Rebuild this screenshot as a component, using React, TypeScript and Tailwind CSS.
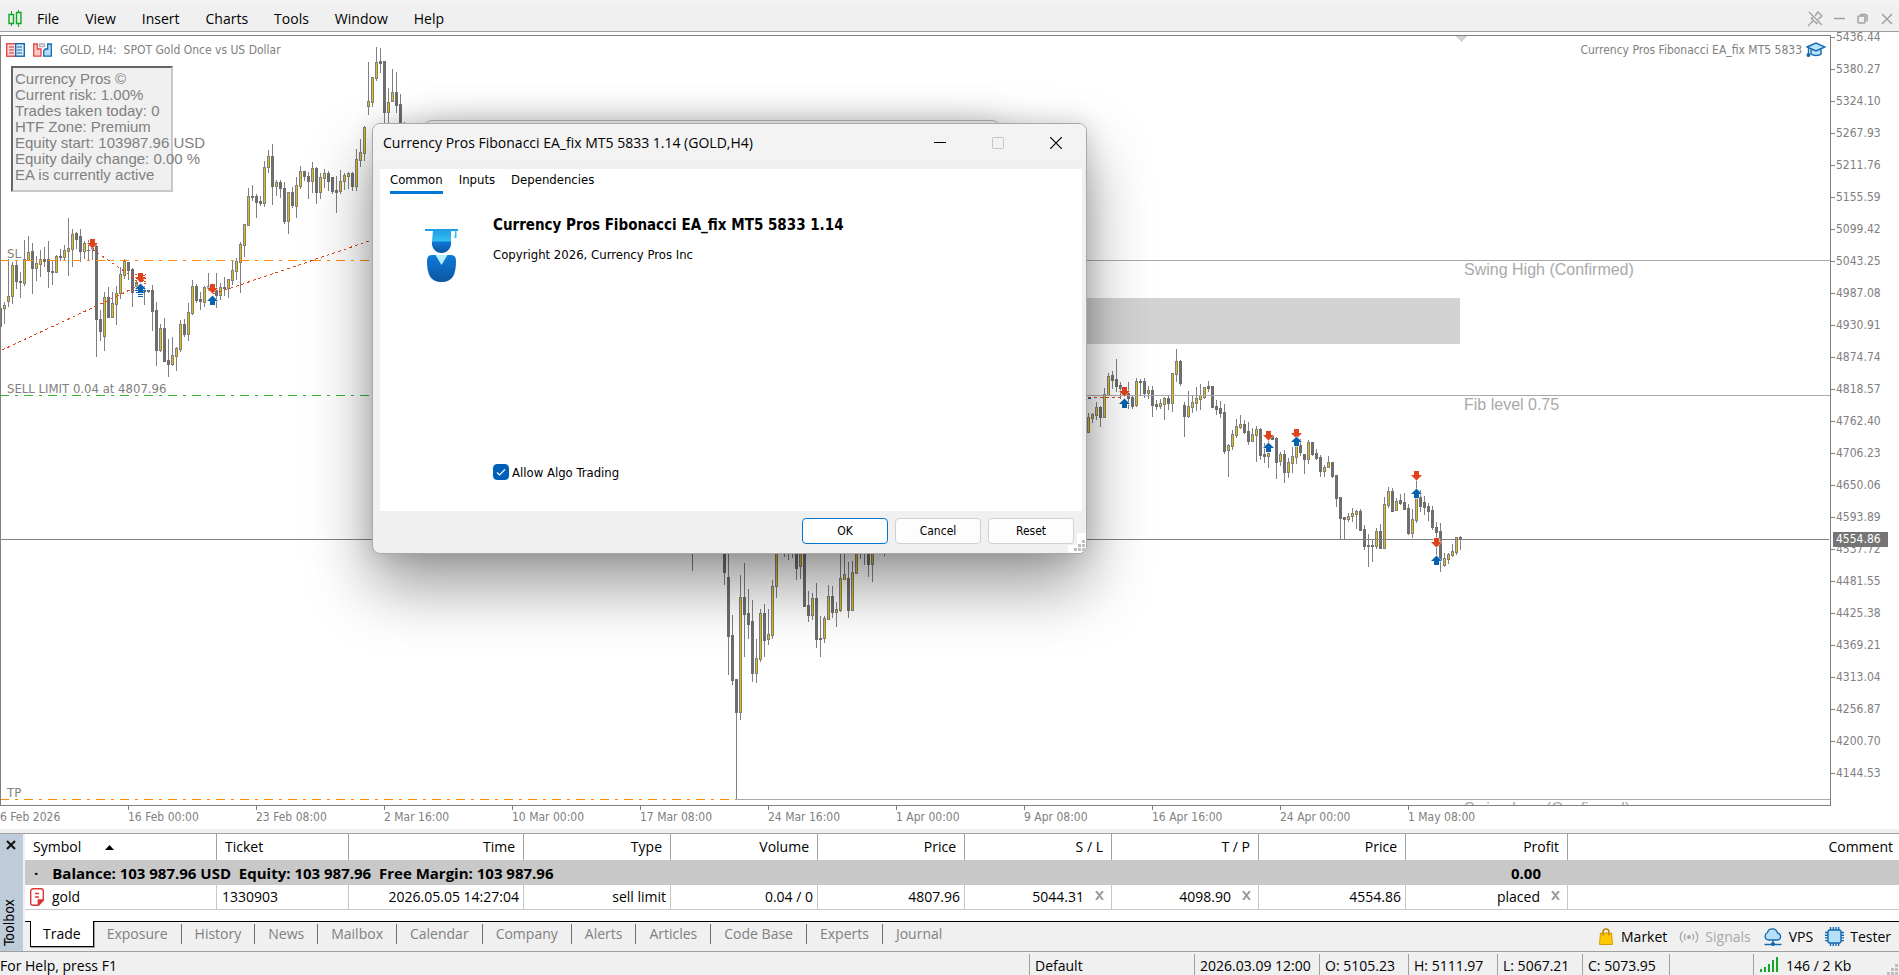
import { ReactNode, useState } from "react";

type Candle = [
  x: number,
  high: number,
  top: number,
  bottom: number,
  low: number,
  up: 0 | 1
];

const candles: Candle[] = [
  [0, 308, 308, 326, 326, 0],
  [4, 302, 305, 308, 323, 1],
  [8, 259, 296, 301, 306, 1],
  [12, 262, 265, 296, 303, 1],
  [16, 260, 265, 281, 288, 0],
  [20, 272, 281, 282, 297, 0],
  [24, 240, 259, 283, 285, 1],
  [28, 236, 252, 260, 260, 1],
  [32, 243, 251, 268, 293, 0],
  [36, 256, 263, 268, 280, 1],
  [40, 250, 259, 264, 276, 1],
  [44, 247, 259, 261, 266, 0],
  [48, 241, 259, 271, 287, 0],
  [52, 260, 271, 272, 284, 0],
  [56, 255, 256, 272, 272, 1],
  [60, 249, 256, 257, 260, 0],
  [64, 245, 250, 257, 260, 1],
  [68, 218, 248, 251, 275, 1],
  [72, 229, 234, 249, 266, 1],
  [76, 232, 233, 239, 248, 0],
  [80, 229, 236, 251, 261, 0],
  [84, 241, 243, 251, 258, 1],
  [88, 240, 250, 250, 260, 0],
  [92, 246, 248, 248, 259, 0],
  [96, 245, 246, 319, 356, 0],
  [100, 310, 319, 331, 340, 0],
  [104, 292, 297, 336, 350, 1],
  [108, 287, 297, 317, 317, 0],
  [112, 292, 303, 317, 317, 1],
  [116, 286, 293, 304, 324, 1],
  [120, 267, 274, 293, 298, 1],
  [124, 259, 261, 275, 278, 1],
  [128, 262, 262, 270, 279, 0],
  [132, 268, 269, 292, 306, 0],
  [136, 280, 282, 286, 290, 1],
  [144, 286, 290, 291, 304, 0],
  [148, 290, 290, 291, 292, 0],
  [152, 285, 290, 311, 330, 0],
  [156, 302, 310, 350, 365, 0],
  [160, 324, 328, 350, 351, 1],
  [164, 318, 328, 361, 361, 0],
  [168, 339, 360, 364, 376, 0],
  [172, 337, 355, 364, 365, 1],
  [176, 347, 348, 356, 370, 1],
  [180, 320, 324, 349, 351, 1],
  [184, 319, 324, 334, 336, 0],
  [188, 303, 312, 334, 340, 1],
  [192, 280, 286, 313, 314, 1],
  [196, 284, 286, 300, 302, 0],
  [200, 292, 299, 301, 309, 0],
  [204, 286, 287, 302, 306, 1],
  [208, 273, 286, 287, 290, 0],
  [216, 273, 290, 295, 307, 0],
  [220, 283, 287, 295, 299, 1],
  [224, 277, 287, 288, 295, 0],
  [228, 279, 279, 288, 297, 1],
  [232, 261, 270, 280, 284, 1],
  [236, 258, 261, 271, 279, 1],
  [240, 242, 244, 262, 292, 1],
  [244, 224, 224, 245, 256, 1],
  [248, 188, 196, 225, 225, 1],
  [252, 185, 196, 197, 200, 0],
  [256, 194, 196, 202, 217, 0],
  [260, 196, 201, 203, 205, 0],
  [264, 161, 167, 203, 206, 1],
  [268, 150, 156, 167, 172, 1],
  [272, 144, 156, 186, 204, 0],
  [276, 180, 182, 186, 195, 1],
  [280, 180, 182, 188, 197, 0],
  [284, 182, 188, 221, 223, 0],
  [288, 192, 192, 221, 233, 1],
  [292, 187, 192, 205, 207, 0],
  [296, 177, 185, 206, 217, 1],
  [300, 166, 171, 186, 188, 1],
  [304, 171, 171, 176, 180, 0],
  [308, 172, 176, 181, 198, 0],
  [312, 162, 168, 181, 192, 1],
  [316, 167, 168, 192, 203, 0],
  [320, 173, 177, 192, 198, 1],
  [324, 169, 173, 178, 187, 1],
  [328, 171, 173, 181, 190, 0],
  [332, 177, 177, 191, 193, 0],
  [336, 176, 190, 192, 212, 0],
  [340, 170, 181, 191, 193, 1],
  [344, 173, 175, 181, 189, 1],
  [348, 172, 173, 176, 188, 1],
  [352, 172, 173, 186, 190, 0],
  [356, 149, 159, 186, 190, 1],
  [360, 139, 152, 160, 166, 1],
  [364, 126, 127, 153, 160, 1],
  [368, 62, 101, 106, 114, 1],
  [372, 77, 77, 102, 106, 1],
  [376, 47, 62, 78, 80, 1],
  [380, 48, 61, 63, 72, 0],
  [384, 61, 61, 112, 124, 0],
  [388, 88, 102, 112, 122, 1],
  [392, 69, 92, 101, 101, 1],
  [396, 72, 92, 105, 112, 0],
  [400, 94, 104, 127, 130, 0],
  [404, 122, 124, 130, 130, 0],
  [692, 550, 550, 550, 570, 0],
  [724, 545, 550, 572, 584, 0],
  [728, 550, 577, 636, 674, 0],
  [732, 615, 635, 680, 684, 0],
  [736, 679, 679, 712, 799, 0],
  [740, 575, 597, 712, 719, 1],
  [744, 563, 597, 614, 656, 0],
  [748, 589, 613, 624, 638, 0],
  [752, 600, 621, 673, 681, 0],
  [756, 639, 658, 673, 682, 1],
  [760, 609, 613, 659, 661, 1],
  [764, 604, 613, 640, 656, 0],
  [768, 609, 634, 639, 644, 1],
  [772, 580, 586, 635, 638, 1],
  [776, 550, 550, 586, 597, 1],
  [784, 550, 550, 550, 556, 0],
  [788, 550, 550, 550, 559, 0],
  [792, 550, 550, 550, 557, 0],
  [796, 550, 550, 568, 579, 0],
  [800, 550, 550, 566, 578, 1],
  [804, 550, 550, 606, 606, 0],
  [808, 591, 605, 615, 621, 0],
  [812, 593, 598, 615, 619, 1],
  [816, 583, 598, 639, 647, 0],
  [820, 616, 638, 639, 656, 0],
  [824, 616, 618, 638, 642, 1],
  [828, 585, 596, 619, 619, 1],
  [832, 586, 596, 612, 617, 0],
  [836, 602, 609, 612, 626, 1],
  [840, 553, 578, 610, 611, 1],
  [844, 554, 574, 579, 579, 1],
  [848, 562, 578, 610, 617, 0],
  [852, 561, 572, 610, 610, 1],
  [856, 550, 550, 573, 573, 1],
  [860, 550, 550, 550, 558, 0],
  [864, 550, 550, 550, 564, 0],
  [868, 550, 550, 564, 576, 0],
  [872, 550, 550, 564, 581, 1],
  [884, 550, 550, 550, 555, 0],
  [1088, 413, 417, 432, 432, 1],
  [1092, 413, 414, 418, 422, 1],
  [1096, 402, 407, 415, 419, 1],
  [1100, 406, 407, 417, 426, 0],
  [1104, 388, 394, 417, 417, 1],
  [1108, 373, 376, 395, 395, 1],
  [1112, 371, 375, 380, 388, 0],
  [1116, 359, 379, 386, 391, 0],
  [1120, 382, 385, 388, 398, 0],
  [1128, 382, 393, 398, 408, 0],
  [1132, 396, 397, 406, 408, 0],
  [1136, 378, 381, 405, 406, 1],
  [1140, 379, 381, 382, 394, 0],
  [1144, 378, 381, 393, 397, 0],
  [1148, 386, 390, 393, 398, 1],
  [1152, 386, 390, 405, 416, 0],
  [1156, 400, 404, 406, 409, 0],
  [1160, 399, 403, 406, 408, 1],
  [1164, 397, 398, 404, 419, 1],
  [1168, 396, 398, 403, 409, 0],
  [1172, 373, 373, 403, 411, 1],
  [1176, 349, 361, 374, 381, 1],
  [1180, 360, 361, 383, 385, 0],
  [1184, 402, 405, 416, 436, 0],
  [1188, 391, 406, 416, 417, 1],
  [1192, 396, 402, 407, 412, 1],
  [1196, 387, 398, 403, 410, 1],
  [1200, 384, 395, 399, 409, 1],
  [1204, 387, 387, 397, 398, 1],
  [1208, 381, 386, 388, 391, 0],
  [1212, 386, 386, 407, 407, 0],
  [1216, 400, 406, 409, 414, 0],
  [1220, 401, 408, 413, 417, 0],
  [1224, 404, 412, 451, 453, 0],
  [1228, 444, 445, 450, 476, 1],
  [1232, 430, 434, 446, 449, 1],
  [1236, 419, 426, 435, 437, 1],
  [1240, 415, 424, 427, 428, 1],
  [1244, 420, 424, 432, 433, 0],
  [1248, 422, 431, 441, 444, 0],
  [1252, 428, 434, 441, 441, 1],
  [1256, 426, 429, 435, 461, 1],
  [1260, 428, 429, 455, 459, 0],
  [1264, 443, 454, 456, 462, 0],
  [1268, 440, 453, 456, 467, 1],
  [1272, 436, 436, 439, 439, 0],
  [1276, 437, 438, 462, 478, 0],
  [1280, 452, 454, 461, 465, 1],
  [1284, 450, 454, 472, 482, 0],
  [1288, 458, 462, 472, 477, 1],
  [1292, 447, 456, 463, 472, 1],
  [1296, 440, 445, 457, 463, 1],
  [1300, 439, 445, 452, 455, 0],
  [1304, 454, 454, 459, 473, 0],
  [1308, 440, 442, 459, 463, 1],
  [1312, 442, 442, 454, 455, 0],
  [1316, 449, 453, 458, 459, 0],
  [1320, 455, 457, 471, 476, 0],
  [1324, 465, 467, 471, 476, 1],
  [1328, 456, 462, 467, 467, 1],
  [1332, 462, 462, 476, 477, 0],
  [1336, 475, 475, 498, 506, 0],
  [1340, 497, 497, 518, 539, 0],
  [1344, 517, 517, 519, 539, 0],
  [1348, 513, 516, 519, 521, 1],
  [1352, 508, 513, 516, 521, 1],
  [1356, 510, 511, 514, 528, 1],
  [1360, 509, 511, 530, 530, 0],
  [1364, 525, 529, 546, 549, 0],
  [1368, 534, 545, 546, 566, 0],
  [1372, 540, 545, 546, 561, 0],
  [1376, 528, 531, 546, 548, 1],
  [1380, 524, 531, 548, 548, 0],
  [1384, 497, 504, 548, 548, 1],
  [1388, 487, 491, 505, 507, 1],
  [1392, 488, 491, 511, 511, 0],
  [1396, 498, 501, 510, 510, 1],
  [1400, 494, 500, 503, 504, 0],
  [1404, 493, 502, 509, 509, 0],
  [1408, 504, 508, 533, 534, 0],
  [1412, 509, 519, 533, 537, 1],
  [1416, 480, 497, 520, 522, 1],
  [1420, 490, 497, 506, 511, 0],
  [1424, 496, 502, 507, 514, 0],
  [1428, 503, 506, 511, 520, 0],
  [1432, 506, 510, 527, 529, 0],
  [1436, 522, 527, 532, 554, 0],
  [1440, 523, 531, 560, 571, 0],
  [1444, 553, 558, 565, 566, 1],
  [1448, 553, 554, 559, 563, 1],
  [1452, 544, 551, 555, 556, 1],
  [1456, 537, 537, 552, 554, 1],
  [1460, 536, 537, 539, 549, 0],
];

const sells = [
  [92, 239],
  [140, 273],
  [212, 284],
  [1124, 387],
  [1268, 431],
  [1296, 429],
  [1416, 471],
  [1436, 538],
];

const buys = [
  [140, 284],
  [212, 296],
  [1124, 399],
  [1268, 443],
  [1296, 437],
  [1416, 489],
  [1436, 556],
];

const prices = [
  "5436.44",
  "5380.27",
  "5324.10",
  "5267.93",
  "5211.76",
  "5155.59",
  "5099.42",
  "5043.25",
  "4987.08",
  "4930.91",
  "4874.74",
  "4818.57",
  "4762.40",
  "4706.23",
  "4650.06",
  "4593.89",
  "4537.72",
  "4481.55",
  "4425.38",
  "4369.21",
  "4313.04",
  "4256.87",
  "4200.70",
  "4144.53",
];

const dates = [
  "6 Feb 2026",
  "16 Feb 00:00",
  "23 Feb 08:00",
  "2 Mar 16:00",
  "10 Mar 00:00",
  "17 Mar 08:00",
  "24 Mar 16:00",
  "1 Apr 00:00",
  "9 Apr 08:00",
  "16 Apr 16:00",
  "24 Apr 00:00",
  "1 May 08:00",
];

const panelLines = [
  "Currency Pros ©",
  "Current risk: 1.00%",
  "Trades taken today: 0",
  "HTF Zone: Premium",
  "Equity start: 103987.96 USD",
  "Equity daily change: 0.00 %",
  "EA is currently active",
];

const menus = ["File", "View", "Insert", "Charts", "Tools", "Window", "Help"];

const toolboxTabs = [
  "Trade",
  "Exposure",
  "History",
  "News",
  "Mailbox",
  "Calendar",
  "Company",
  "Alerts",
  "Articles",
  "Code Base",
  "Experts",
  "Journal",
];

const MenuBar = () => (
  <header className="flex h-8 shrink-0 items-center justify-between border-t-[6px] border-b border-t-[#f3f3f3] border-b-[#a0a0a0] bg-[#f0f0f0] pr-[6px] pl-2">
    <div className="flex items-center">
      <svg width="14" height="19" viewBox="0 0 14 19" fill="#dff5e0" stroke="#14a52c">
        <path d="M3.5 2v15M10.5 1v17" />
        <path d="M1 5.500h4.500v9H1z" strokeWidth="1.400" />
        <path d="M8.500 3.500H13v11H8.500z" strokeWidth="1.400" />
      </svg>
      <nav className="ml-1 flex gap-1">
        {menus.map((menu) => (
          <button key={menu} className="px-[11px] text-sm leading-5 text-black">
            {menu}
          </button>
        ))}
      </nav>
    </div>
    <div className="flex items-center gap-[10px] text-[#a0a0a0]">
      <button aria-label="Pin">
        <svg width="17" height="16" viewBox="0 0 17 16" fill="none" stroke="currentColor" strokeWidth="1.300">
          <path d="M2 1l13 13M1 15l5-5M9 3l2-2 4 4-2 2M4 7l6 6M10 2.500L8 5M13.500 6L11 8.500M4 7l2-.5M10 13v-2" />
        </svg>
      </button>
      <button aria-label="Minimize chart">
        <svg width="11" height="12" stroke="currentColor" strokeWidth="1.500">
          <path d="M0 5.500h11" />
        </svg>
      </button>
      <button aria-label="Restore chart" className="ml-[2px]">
        <svg width="12" height="12" fill="none" stroke="currentColor" strokeWidth="1.500">
          <rect x="1" y="3" width="7" height="7" rx="1" />
          <path d="M3 1.500h5a2 2 0 012 2v5" />
        </svg>
      </button>
      <button aria-label="Close chart" className="ml-[2px]">
        <svg width="12" height="12" stroke="currentColor" strokeWidth="1.500">
          <path d="M1 1l10 10M11 1L1 11" />
        </svg>
      </button>
    </div>
  </header>
);

const ChartDrawing = () => (
  <svg className="absolute inset-0 h-full w-full" fontFamily="'DejaVu Sans Condensed', 'DejaVu Sans', sans-serif">
    {/* rows are counted from the top of the window, the chart starts 36px below it */}
    <g transform="translate(-1 -36)">
      <g shapeRendering="crispEdges">
        <rect x="700" y="298" width="760" height="46" fill="#d3d3d3" />
        <path d="M1455 36h12l-6 6z" fill="#d3d3d3" />
        {candles.map(([x, high, top, bottom, low, up]) => (
          <g key={x}>
            <rect x={x} y={high} width="1" height={low - high + 1} fill="#808080" />
            <rect x={x - 1} y={top} width="3" height={bottom - top + 1} fill={up ? "#808080" : "#6e6e6e"} />
            {up === 1 && bottom - top > 1 && (
              <rect x={x} y={top + 1} width="1" height={bottom - top - 1} fill="#e6be00" />
            )}
          </g>
        ))}
        <rect x="1000" y="260" width="100%" height="1" fill="#a9a9a9" />
        <rect x="1000" y="395" width="100%" height="1" fill="#a9a9a9" />
        <rect x="736" y="799" width="100%" height="1" fill="#a9a9a9" />
        <rect x="0" y="539" width="100%" height="1" fill="#808080" />
        <g strokeDasharray="9 6 3 6" fill="none">
          <path d="M0 260.500H500" stroke="#ff8c00" />
          <path d="M0 395.500H500" stroke="#32b432" />
          <path d="M0 799.500H736" stroke="#ff8c00" />
        </g>
        <g strokeDasharray="3 3" fill="none" stroke="#e0431b">
          <path d="M2 350L92 308L136 287" />
          <path d="M92 249L137 280" />
          <path d="M213 294L290 268L372 240" />
          <path d="M1088 397.500H1122" />
        </g>
        <path d="M1088 398h3" stroke="#0562b1" />
      </g>
      <g fill="#e0431b" stroke="#fff" strokeWidth="1" paintOrder="stroke">
        {sells.map(([x, y]) => (
          <path key={x} d={`M${x - 2} ${y}h5v4h3l-5.500 5.500l-5.500 -5.500h3z`} />
        ))}
      </g>
      <g fill="#0562b1" stroke="#fff" strokeWidth="1" paintOrder="stroke">
        {buys.map(([x, y]) => (
          <path key={x} d={`M${x + 0.5} ${y - 0.5}l5.500 5.500h-3v4h-5v-4h-3z`} />
        ))}
      </g>
      <g shapeRendering="crispEdges" fill="none">
        <path d="M135 281l11 -7M135 274l11 8M136 284l10 -6M136 278l10 6" stroke="#e0431b" strokeDasharray="2 1" />
        <path d="M135 290.500h11M136 292.500h9M138 294.500h5M138 296.500h5" stroke="#0562b1" />
      </g>
      <g fill="#808080" fontSize="13">
        <text x="7" y="258">SL</text>
        <text x="7" y="393">SELL LIMIT 0.04 at 4807.96</text>
        <text x="7" y="797">TP</text>
      </g>
      <g fill="#a9a9a9" fontSize="16" fontFamily="'Liberation Sans', Arial, sans-serif">
        <text x="1464" y="275">Swing High (Confirmed)</text>
        <text x="1464" y="410">Fib level 0.75</text>
        <text x="1464" y="814">Swing Low (Confirmed)</text>
      </g>
    </g>
  </svg>
);

const Chart = () => (
  <section className="flex min-h-0 flex-1 bg-white font-['DejaVu_Sans_Condensed','DejaVu_Sans',sans-serif] text-xs text-[#808080]">
    <div className="flex min-w-0 flex-1 flex-col pt-[3px]">
      <div className="relative min-h-0 flex-1 overflow-hidden border border-[#808080]">
        <ChartDrawing />
        <div className="relative flex justify-between pt-[5px] pr-1 pl-[5px] leading-[18px]">
          <div className="flex items-center gap-2">
            <svg width="19" height="14" viewBox="0 0 19 14" fill="none">
              <rect x=".7" y=".7" width="9" height="12.500" fill="#ffd9d9" stroke="#e04848" strokeWidth="1.400" />
              <rect x="9.700" y=".7" width="8.600" height="12.500" fill="#d5ebfb" stroke="#1469ae" strokeWidth="1.400" />
              <path d="M3 4h5M3 7h5M3 10h5" stroke="#d03030" strokeWidth="1.200" />
              <path d="M11 4h5M11 7h5M11 10h5" stroke="#1469ae" strokeWidth="1.200" />
            </svg>
            <svg width="19" height="14" viewBox="0 0 19 14" fill="none" strokeWidth="1.300">
              <path d="M.7 1h3.600v5H8v7.200H.7z" fill="#ffc9c9" stroke="#e04848" />
              <path d="M18.300 1h-3.600v5h-2.500l-1.500 2v5.200h7.600z" fill="#b5dcf8" stroke="#1469ae" />
              <path d="M6.500 3.500v-2.500h5v2.500z" stroke="#b0b0b0" />
            </svg>
            <span className="whitespace-pre">GOLD, H4:  SPOT Gold Once vs US Dollar</span>
          </div>
          <div className="flex items-center gap-1">
            <span>Currency Pros Fibonacci EA_fix MT5 5833</span>
            <svg width="20" height="16" viewBox="0 0 20 16" fill="#b9e2fb" stroke="#1469ae" strokeWidth="1.400">
              <path d="M5 6v6c2 2 8 2 10 0V6z" />
              <path d="M1 5l9-4 9 4-9 4z" />
              <path d="M2.500 6v6" />
              <circle cx="2.500" cy="13" r="1.300" fill="#1469ae" />
            </svg>
          </div>
        </div>
        <div className="relative mt-[7px] ml-[10px] h-[126px] w-[162px] border-2 border-t-[#646464] border-r-[#c8c8c8] border-b-[#c8c8c8] border-l-[#646464] bg-[#f0f0f0] pt-[3px] pl-[2px] font-['Liberation_Sans',Arial,sans-serif] text-[15px] leading-4 whitespace-nowrap">
          {panelLines.map((line) => (
            <p key={line}>{line}</p>
          ))}
        </div>
      </div>
      <div className="flex h-[23px] shrink-0 overflow-hidden">
        {dates.map((date, i) => (
          <div key={date} className="w-32 shrink-0">
            <div className={i === 0 ? "h-1" : "h-1 border-l border-[#808080]"} />
            <p className="leading-[15px] whitespace-nowrap">{date}</p>
          </div>
        ))}
      </div>
    </div>
    <div className="relative flex w-[68px] shrink-0 flex-col gap-[22px]">
      {prices.map((price) => (
        <div key={price} className="flex h-[10px] shrink-0 items-center gap-px">
          <span className="h-px w-1 bg-[#808080]" />
          <span className="leading-[10px]">{price}</span>
        </div>
      ))}
      <div className="absolute top-[500px] left-[2px] h-[15px] w-[55px] bg-[#757575] pl-[3px] leading-[15px] text-white">
        4554.86
      </div>
    </div>
  </section>
);

const DialogButton = (props: { label: string; primary?: boolean }) => (
  <button
    className={
      props.primary
        ? "h-[26px] w-[86px] rounded border border-[#0078d4] bg-white"
        : "h-[26px] w-[86px] rounded border border-[#d0d0d0] bg-[#fdfdfd]"
    }
  >
    {props.label}
  </button>
);

const EaDialog = () => {
  const [tab, setTab] = useState("Common");
  const [allowAlgo, setAllowAlgo] = useState(true);

  return (
    <>
      <div className="absolute top-[120px] left-[424px] h-[300px] w-[576px] rounded-lg border border-[#b4b4b4] bg-[#f3f3f3] shadow-[0_4px_40px_rgba(0,0,0,0.2)]" />
      <div
        role="dialog"
        aria-labelledby="ea-title"
        className="absolute top-[123px] left-[372px] flex h-[431px] w-[715px] flex-col overflow-hidden rounded-lg border border-[#a8a8a8] bg-[#f0f0f0] font-['DejaVu_Sans_Condensed','DejaVu_Sans',sans-serif] text-[13px] text-black shadow-[0_32px_64px_rgba(0,0,0,0.4),0_0_24px_rgba(0,0,0,0.15)]"
      >
        <div className="flex h-[37px] shrink-0 items-center justify-between bg-[#f3f3f3] pr-6 pl-[10px]">
          <h1 id="ea-title" className="font-['Open_Sans',sans-serif] text-sm">
            Currency Pros Fibonacci EA_fix MT5 5833 1.14 (GOLD,H4)
          </h1>
          <div className="flex items-center gap-[46px]">
            <button aria-label="Minimize">
              <svg width="12" height="12" stroke="#000">
                <path d="M0 5.500h12" />
              </svg>
            </button>
            <button aria-label="Maximize" disabled>
              <svg width="12" height="12" fill="none" stroke="#c4c4c4">
                <rect x=".5" y=".5" width="11" height="11" rx="1" />
              </svg>
            </button>
            <button aria-label="Close">
              <svg width="12" height="12" stroke="#000" strokeWidth="1.200">
                <path d="M0 0l12 12M12 0L0 12" />
              </svg>
            </button>
          </div>
        </div>
        <div className="mt-2 mr-1 ml-[7px] flex flex-1 flex-col bg-white">
          <div role="tablist" className="flex gap-4 pl-[10px]">
            {["Common", "Inputs", "Dependencies"].map((name) => (
              <button
                key={name}
                role="tab"
                aria-selected={tab === name}
                onClick={() => setTab(name)}
                className={
                  tab === name
                    ? "h-[25px] border-b-[3px] border-[#0078d7]"
                    : "h-[25px] border-b-[3px] border-transparent"
                }
              >
                {name}
              </button>
            ))}
          </div>
          <div className="flex flex-1 gap-[33px] pt-[21px] pl-[44px]">
            <svg width="36" height="60" viewBox="0 0 36 60" className="mt-3">
              <defs>
                <linearGradient id="ea-cap" x1="0" x2="0" y1="0" y2="1">
                  <stop offset="0" stopColor="#1f9ce6" />
                  <stop offset="1" stopColor="#35c1f1" />
                </linearGradient>
                <linearGradient id="ea-body" x1="0" x2="0" y1="0" y2="1">
                  <stop offset="0" stopColor="#0f7bd8" />
                  <stop offset="1" stopColor="#0a56a0" />
                </linearGradient>
              </defs>
              <path d="M8 14h19c1 6-3 12-9.500 12S7 20 8 14z" fill="url(#ea-body)" />
              <path d="M1 2h33v2H1z" fill="#1f9ce6" />
              <path d="M9 3h18v11.500H8z" fill="url(#ea-cap)" />
              <path d="M31 3h1.500v5h-1.500zM30.500 8h2v3h-2z" fill="#35c1f1" />
              <path d="M8 28h19c4 0 5 3 5 6 0 13-3 21-14.500 21S3 47 3 34c0-3 1-6 5-6z" fill="url(#ea-body)" />
              <path d="M11.500 28h12l-6 10z" fill="#b5f0fb" />
            </svg>
            <div className="flex flex-1 flex-col">
              <h2 className="text-[15px] font-bold leading-5">
                Currency Pros Fibonacci EA_fix MT5 5833 1.14
              </h2>
              <p className="mt-[11px] leading-[18px]">Copyright 2026, Currency Pros Inc</p>
              <label className="mt-auto mb-[29px] flex items-center gap-[3px]">
                <span className="relative flex size-4">
                  <input
                    type="checkbox"
                    checked={allowAlgo}
                    onChange={(e) => setAllowAlgo(e.target.checked)}
                    className="size-4 appearance-none rounded border border-[#005fb8] checked:bg-[#005fb8]"
                  />
                  {allowAlgo && (
                    <svg className="pointer-events-none absolute inset-0" width="16" height="16" fill="none" stroke="#fff" strokeWidth="1.200">
                      <path d="M4 8.500l2.500 2.500L12 5.500" />
                    </svg>
                  )}
                </span>
                Allow Algo Trading
              </label>
            </div>
          </div>
        </div>
        <div className="flex h-[42px] shrink-0 justify-end gap-[7px] pt-[7px] pr-3 text-xs">
          <DialogButton label="OK" primary />
          <DialogButton label="Cancel" />
          <DialogButton label="Reset" />
        </div>
        <svg className="absolute right-0 bottom-0" width="18" height="20" shapeRendering="crispEdges">
          <path d="M9 0h9v20H0v-8h9z" fill="#fff" />
          <path d="M14 7h3v3h-3zM14 11h3v3h-3zM10 11h3v3h-3zM14 15h3v3h-3zM10 15h3v3h-3zM6 15h3v3H6z" fill="#bfbfbf" />
        </svg>
      </div>
    </>
  );
};

const RemoveButton = (props: { label: string }) => (
  <button aria-label={props.label} className="-mt-1">
    <svg width="9" height="9" stroke="#9a9a9a" strokeWidth="2">
      <path d="M1 0l7 9M8 0L1 9" />
    </svg>
  </button>
);

const HeadCell = (props: { children: ReactNode; left?: boolean }) => (
  <th
    scope="col"
    className={
      props.left
        ? "border-r border-[#a0a0a0] px-2 text-left font-normal"
        : "border-r border-[#a0a0a0] px-2 text-right font-normal last:border-r-0 last:pr-[6px]"
    }
  >
    {props.children}
  </th>
);

const Cell = (props: { children?: ReactNode; left?: boolean }) => (
  <td
    className={
      props.left
        ? "border-r border-[#c8c8c8] px-[5px] text-left"
        : "border-r border-[#c8c8c8] px-1 text-right last:border-r-0"
    }
  >
    {props.children}
  </td>
);

const TradeTable = () => (
  <table className="w-full table-fixed border-separate border-spacing-0 text-sm leading-5 whitespace-nowrap text-black">
    <colgroup>
      <col className="w-[192px]" />
      <col className="w-[132px]" />
      <col className="w-[175px]" />
      <col className="w-[147px]" />
      <col className="w-[147px]" />
      <col className="w-[147px]" />
      <col className="w-[147px]" />
      <col className="w-[147px]" />
      <col className="w-[147px]" />
      <col className="w-[162px]" />
      <col />
    </colgroup>
    <thead>
      <tr className="h-[26px] bg-white">
        <HeadCell left>
          <span className="flex items-center gap-6">
            Symbol
            <svg width="9" height="5">
              <path d="M0 5h9L4.500 0z" />
            </svg>
          </span>
        </HeadCell>
        <HeadCell left>Ticket</HeadCell>
        <HeadCell>Time</HeadCell>
        <HeadCell>Type</HeadCell>
        <HeadCell>Volume</HeadCell>
        <HeadCell>Price</HeadCell>
        <HeadCell>S / L</HeadCell>
        <HeadCell>T / P</HeadCell>
        <HeadCell>Price</HeadCell>
        <HeadCell>Profit</HeadCell>
        <HeadCell>Comment</HeadCell>
      </tr>
    </thead>
    <tbody>
      <tr className="h-[25px] bg-[#c8c8c8] text-[15px] font-bold">
        <td colSpan={9} className="pl-[9px]">
          <span className="flex gap-[14px] whitespace-pre">
            <span>·</span>
            <span>Balance: 103 987.96 USD  Equity: 103 987.96  Free Margin: 103 987.96</span>
          </span>
        </td>
        <td className="pr-[27px] text-right">0.00</td>
        <td />
      </tr>
      <tr className="h-6 bg-white">
        <Cell left>
          <span className="flex items-center gap-2">
            <svg width="14" height="18" viewBox="0 0 14 18" fill="#fff" stroke="#d93636" strokeWidth="1.400">
              <path d="M3 .7h8a2.300 2.300 0 012.300 2.300v9l-5 5.300H3A2.300 2.300 0 01.7 15V3A2.300 2.300 0 013 .7z" />
              <path d="M13.300 12h-5v5.300z" fill="#d93636" />
              <path d="M5 5.500h4M5 9h4" />
            </svg>
            gold
          </span>
        </Cell>
        <Cell left>1330903</Cell>
        <Cell>2026.05.05 14:27:04</Cell>
        <Cell>sell limit</Cell>
        <Cell>0.04 / 0</Cell>
        <Cell>4807.96</Cell>
        <Cell>
          <span className="flex items-center justify-end gap-[11px] pr-[3px]">
            5044.31
            <RemoveButton label="Remove S / L" />
          </span>
        </Cell>
        <Cell>
          <span className="flex items-center justify-end gap-[11px] pr-[3px]">
            4098.90
            <RemoveButton label="Remove T / P" />
          </span>
        </Cell>
        <Cell>4554.86</Cell>
        <Cell>
          <span className="flex items-center justify-end gap-[11px] pr-[3px]">
            placed
            <RemoveButton label="Cancel order" />
          </span>
        </Cell>
        <Cell />
      </tr>
    </tbody>
  </table>
);

const Toolbox = () => {
  const [active, setActive] = useState("Trade");

  return (
    <section className="flex shrink-0 border-y border-[#a0a0a0] bg-[#f0f0f0]">
      <aside className="flex w-[23px] shrink-0 flex-col items-center justify-between bg-[#becbd8] pt-[6px] pr-[2px] pb-[5px]">
        <button aria-label="Close toolbox">
          <svg width="10" height="10" stroke="#111" strokeWidth="2">
            <path d="M1 1l8 8M9 1L1 9" />
          </svg>
        </button>
        <h2 className="mr-1 rotate-180 font-['DejaVu_Sans_Condensed','DejaVu_Sans',sans-serif] text-sm leading-4 text-black [writing-mode:vertical-rl]">
          Toolbox
        </h2>
      </aside>
      <div className="ml-[2px] min-w-0 flex-1">
        <div className="bg-white pb-[11px]">
          <div className="border-b border-[#c8c8c8]">
            <TradeTable />
          </div>
        </div>
        <div className="flex h-[30px] justify-between border-t border-black text-sm leading-5 whitespace-nowrap">
          <div role="tablist" className="flex items-start">
            {toolboxTabs.map((name) =>
              name === active ? (
                <button
                  key={name}
                  role="tab"
                  aria-selected
                  className="-mt-px ml-[5px] h-[26px] border border-t-0 border-black bg-white px-3 text-black shadow-[1px_1px_0_#a0a0a0]"
                >
                  {name}
                </button>
              ) : (
                <button
                  key={name}
                  role="tab"
                  aria-selected={false}
                  onClick={() => setActive(name)}
                  className="mt-[2px] h-5 border-r border-[#707070] px-[13px] text-[#808080] last:border-r-0"
                >
                  {name}
                </button>
              )
            )}
          </div>
          <div className="flex items-center gap-3 pr-2 text-black">
            <button className="flex items-center gap-2">
              <svg width="14" height="17" viewBox="0 0 14 17">
                <path d="M1.500 5h11l1 11.500H.5z" fill="#ffc800" stroke="#d79a00" />
                <path d="M4 7.500V4a3 3 0 016 0v3.500" fill="none" stroke="#b98500" strokeWidth="1.400" />
              </svg>
              Market
            </button>
            <button disabled className="flex items-center gap-[6px] text-[#a8a8a8]">
              <svg width="20" height="14" viewBox="0 0 20 14" fill="none" stroke="#a8a8a8" strokeWidth="1.300">
                <path d="M3.500 1.500c-3 3-3 8 0 11M6.500 4c-1.500 2-1.500 4 0 6M16.500 1.500c3 3 3 8 0 11M13.500 4c1.500 2 1.500 4 0 6" />
                <circle cx="10" cy="7" r="1.300" fill="#a8a8a8" />
              </svg>
              Signals
            </button>
            <button className="flex items-center gap-[6px]">
              <svg width="20" height="18" viewBox="0 0 20 18" fill="#b5dffa" stroke="#1469ae" strokeWidth="1.300">
                <path d="M5 12a4 4 0 01-.5-7.500C5 2 7 .8 9.500.8S14 2.500 14.500 5A3.600 3.600 0 0115 12z" />
                <path d="M10 12v3M1.500 16.500h17" />
                <circle cx="10" cy="16" r="1.400" fill="#1469ae" />
              </svg>
              VPS
            </button>
            <button className="flex items-center gap-[6px]">
              <svg width="19" height="19" viewBox="0 0 19 19" stroke="#1469ae" strokeWidth="1.400">
                <path d="M5.500 0v19M8.200 0v19M10.900 0v19M13.600 0v19M0 5.500h19M0 8.200h19M0 10.900h19M0 13.600h19" />
                <rect x="3" y="3" width="13" height="13" rx="2" fill="#b5dffa" />
              </svg>
              Tester
            </button>
          </div>
        </div>
      </div>
    </section>
  );
};

const StatusBar = () => (
  <footer className="relative flex h-[23px] shrink-0 bg-[#f0f0f0] pt-[2px] text-sm leading-[21px] whitespace-nowrap text-black">
    <p className="flex-1 pt-[2px] leading-[19px]">For Help, press F1</p>
    <p className="w-[165px] border-l border-[#a0a0a0] pt-[2px] pl-[5px] leading-[19px]">Default</p>
    <p className="w-[125px] border-l border-[#a0a0a0] pt-[2px] pl-[5px] leading-[19px]">2026.03.09 12:00</p>
    <p className="w-[89px] border-l border-[#a0a0a0] pt-[2px] pl-[5px] leading-[19px]">O: 5105.23</p>
    <p className="w-[89px] border-l border-[#a0a0a0] pt-[2px] pl-[5px] leading-[19px]">H: 5111.97</p>
    <p className="w-[85px] border-l border-[#a0a0a0] pt-[2px] pl-[5px] leading-[19px]">L: 5067.21</p>
    <p className="w-[87px] border-l border-[#a0a0a0] pt-[2px] pl-[5px] leading-[19px]">C: 5073.95</p>
    <p className="w-[84px] border-l border-[#a0a0a0]" />
    <p className="flex w-[146px] gap-2 border-l border-[#a0a0a0] pt-[2px] pl-[6px] leading-[19px]">
      <svg width="18" height="15" className="mt-px" fill="#14a52c">
        <path d="M0 12h2v3H0zM4 10h2v5H4zM8 7h2v8H8zM12 3h2v12h-2zM16 0h2v15h-2z" />
      </svg>
      146 / 2 Kb
    </p>
    <svg className="absolute right-0 bottom-0" width="12" height="12" fill="#bfbfbf">
      <path d="M8 1h3v3H8zM8 5h3v3H8zM4 5h3v3H4zM8 9h3v3H8zM4 9h3v3H4zM0 9h3v3H0z" />
    </svg>
  </footer>
);

const App = () => (
  <div className="relative flex h-screen flex-col overflow-hidden bg-[#f0f0f0] font-['Open_Sans','Noto_Sans',sans-serif]">
    <MenuBar />
    <Chart />
    <div className="h-1 shrink-0" />
    <Toolbox />
    <StatusBar />
    <EaDialog />
  </div>
);

export default App;
